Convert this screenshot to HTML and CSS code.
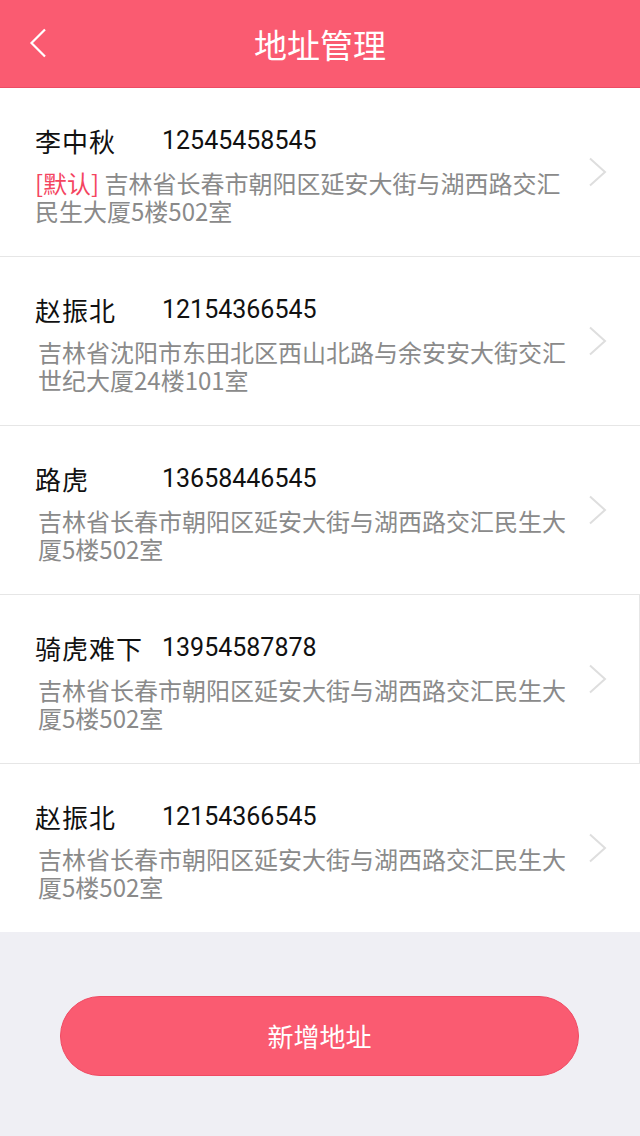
FILE: index.html
```html
<!DOCTYPE html>
<html lang="zh-CN">
<head>
<meta charset="utf-8">
<title>地址管理</title>
<link rel="stylesheet" href="styles.css">
</head>
<body>
<div class="page">
  <header class="topbar">
    <span class="back">
      <svg width="18" height="30" viewBox="0 0 18 30"><path d="M16 1.5 L2.5 15 L16 28.5" fill="none" stroke="#fff" stroke-width="2.2" stroke-linejoin="miter"/></svg>
    </span>
    <h1 class="title">地址管理</h1>
  </header>

  <ul class="list">
    <li class="item">
      <div class="info">
        <div class="row"><span class="name">李中秋</span><span class="phone">12545458545</span></div>
        <p class="addr addr-default"><span class="tag">[默认]</span> 吉林省长春市朝阳区延安大街与湖西路交汇民生大厦5楼502室</p>
      </div>
      <span class="arrow"><svg width="20" height="30" viewBox="0 0 20 30"><path d="M2 1.5 L17 15 L2 28.5" fill="none" stroke="#dedede" stroke-width="2"/></svg></span>
    </li>
    <li class="item">
      <div class="info">
        <div class="row"><span class="name">赵振北</span><span class="phone">12154366545</span></div>
        <p class="addr">吉林省沈阳市东田北区西山北路与余安安大街交汇世纪大厦24楼101室</p>
      </div>
      <span class="arrow"><svg width="20" height="30" viewBox="0 0 20 30"><path d="M2 1.5 L17 15 L2 28.5" fill="none" stroke="#dedede" stroke-width="2"/></svg></span>
    </li>
    <li class="item">
      <div class="info">
        <div class="row"><span class="name">路虎</span><span class="phone">13658446545</span></div>
        <p class="addr">吉林省长春市朝阳区延安大街与湖西路交汇民生大厦5楼502室</p>
      </div>
      <span class="arrow"><svg width="20" height="30" viewBox="0 0 20 30"><path d="M2 1.5 L17 15 L2 28.5" fill="none" stroke="#dedede" stroke-width="2"/></svg></span>
    </li>
    <li class="item item-edge">
      <div class="info">
        <div class="row"><span class="name">骑虎难下</span><span class="phone">13954587878</span></div>
        <p class="addr">吉林省长春市朝阳区延安大街与湖西路交汇民生大厦5楼502室</p>
      </div>
      <span class="arrow"><svg width="20" height="30" viewBox="0 0 20 30"><path d="M2 1.5 L17 15 L2 28.5" fill="none" stroke="#dedede" stroke-width="2"/></svg></span>
    </li>
    <li class="item item-last">
      <div class="info">
        <div class="row"><span class="name">赵振北</span><span class="phone">12154366545</span></div>
        <p class="addr">吉林省长春市朝阳区延安大街与湖西路交汇民生大厦5楼502室</p>
      </div>
      <span class="arrow"><svg width="20" height="30" viewBox="0 0 20 30"><path d="M2 1.5 L17 15 L2 28.5" fill="none" stroke="#dedede" stroke-width="2"/></svg></span>
    </li>
  </ul>

  <div class="footer">
    <button class="add-btn" type="button">新增地址</button>
  </div>
</div>
</body>
</html>
```

FILE: styles.css
```css
* {
  box-sizing: border-box;
}

html, body {
  margin: 0;
  padding: 0;
  background: #efeff4;
}

body {
  font-family: Roboto, "Noto Sans CJK SC", sans-serif;
  width: 640px;
  min-height: 1136px;
}

.page {
  display: flex;
  flex-direction: column;
  min-height: 1136px;
}

.topbar {
  height: 88px;
  background: #fa5b71;
  border-bottom: 1px solid #ec4d64;
  display: flex;
  align-items: center;
  justify-content: center;
  position: relative;
}

.back {
  position: absolute;
  left: 29px;
  top: 28px;
  width: 18px;
  height: 30px;
  display: block;
}

.back svg {
  display: block;
}

.title {
  margin: 0;
  color: #fff;
  font-family: "Noto Sans CJK SC", sans-serif;
  font-weight: 400;
  font-size: 33px;
  line-height: 40px;
}

.list {
  list-style: none;
  margin: 0;
  padding: 0;
  background: #fff;
}

.item {
  height: 169px;
  display: flex;
  align-items: center;
  padding: 0 0 0 35px;
  border-bottom: 1px solid #e6e6e6;
}

.item-edge {
  border-right: 1px solid #e6e6e6;
}

.item-last {
  border-bottom: none;
  height: 168px;
}

.info {
  width: 540px;
  display: flex;
  flex-direction: column;
  padding-top: 4px;
}

.row {
  display: flex;
  align-items: center;
  height: 36px;
  color: #111;
}

.name {
  width: 127px;
  flex: none;
  font-family: "Noto Sans CJK SC", sans-serif;
  font-size: 26px;
  letter-spacing: 1px;
  line-height: 36px;
}

.phone {
  font-family: Roboto, sans-serif;
  font-size: 25px;
  line-height: 36px;
}

.addr {
  margin: 10px 0 0;
  font-family: "Noto Sans CJK SC", sans-serif;
  font-size: 24px;
  line-height: 28px;
  color: #8a8a8a;
  padding-left: 3px;
}

.addr-default {
  padding-left: 0;
}

.tag {
  color: #f4455f;
}

.arrow {
  margin-left: 13px;
  display: block;
  width: 20px;
  height: 30px;
}

.arrow svg {
  display: block;
}

.footer {
  flex: 1;
  display: flex;
  justify-content: center;
  padding-top: 64px;
}

.add-btn {
  width: 519px;
  height: 80px;
  border-radius: 40px;
  border: 1px solid #f04a62;
  background: #fa5b71;
  color: #fff;
  font-family: "Noto Sans CJK SC", sans-serif;
  font-size: 26px;
  line-height: 1;
  padding: 0;
  margin-left: -1px;
}
```
